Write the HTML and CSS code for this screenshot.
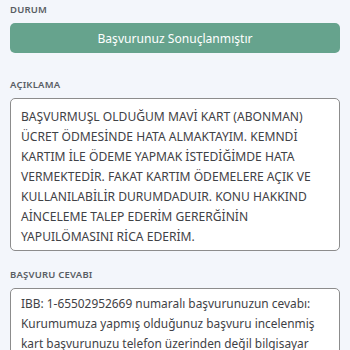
FILE: index.html
```html
<!DOCTYPE html>
<html>
<head>
<meta charset="utf-8">
<link rel="stylesheet" href="styles.css">
</head>
<body>
<div class="page">
  <section class="field field-status">
    <div class="label">DURUM</div>
    <div class="status">Başvurunuz Sonuçlanmıştır</div>
  </section>
  <section class="field field-desc">
    <div class="label">AÇIKLAMA</div>
    <div class="box box-desc">BAŞVURMUŞL OLDUĞUM MAVİ KART (ABONMAN)<br>ÜCRET ÖDMESİNDE HATA ALMAKTAYIM. KEMNDİ<br>KARTIM İLE ÖDEME YAPMAK İSTEDİĞİMDE HATA<br>VERMEKTEDİR. FAKAT KARTIM ÖDEMELERE AÇIK VE<br>KULLANILABİLİR DURUMDADUIR. KONU HAKKIND<br>AİNCELEME TALEP EDERİM GERERĞİNİN<br>YAPUILÖMASINI RİCA EDERİM.</div>
  </section>
  <section class="field">
    <div class="label">BAŞVURU CEVABI</div>
    <div class="box box-reply">IBB: 1-65502952669 numaralı başvurunuzun cevabı:<br>Kurumumuza yapmış olduğunuz başvuru incelenmiş<br>kart başvurunuzu telefon üzerinden değil bilgisayar<br>üzerinden yapmanız gerekmektedir.</div>
  </section>
</div>
</body>
</html>
```
FILE: styles.css
```css
html, body {
  margin: 0;
  padding: 0;
  background: #f3f6fb;
}
.page {
  padding: 4px 10px 0 10px;
  display: flex;
  flex-direction: column;
  font-family: "Noto Sans", sans-serif;
}
.field {
  display: flex;
  flex-direction: column;
  gap: 7px;
}
.field-status {
  margin-bottom: 26px;
}
.field-desc {
  margin-bottom: 18px;
}
.label {
  font-family: "Noto Sans", sans-serif;
  font-size: 9.5px;
  font-weight: 600;
  color: #585d63;
  letter-spacing: 0.2px;
  line-height: 12px;
}
.status {
  height: 30px;
  border-radius: 5px;
  background: #66a38d;
  color: #ffffff;
  font-size: 12.1px;
  display: flex;
  align-items: center;
  justify-content: center;
}
.box {
  background: #ffffff;
  border: 1px solid #8c8c8c;
  border-radius: 5px;
  padding: 8px 10px 3px 10px;
  line-height: 20px;
  color: #3f4246;
  white-space: nowrap;
}
.box-desc {
  font-size: 12.1px;
}
.box-reply {
  padding-top: 4px;
  font-size: 11.9px;
}
```
